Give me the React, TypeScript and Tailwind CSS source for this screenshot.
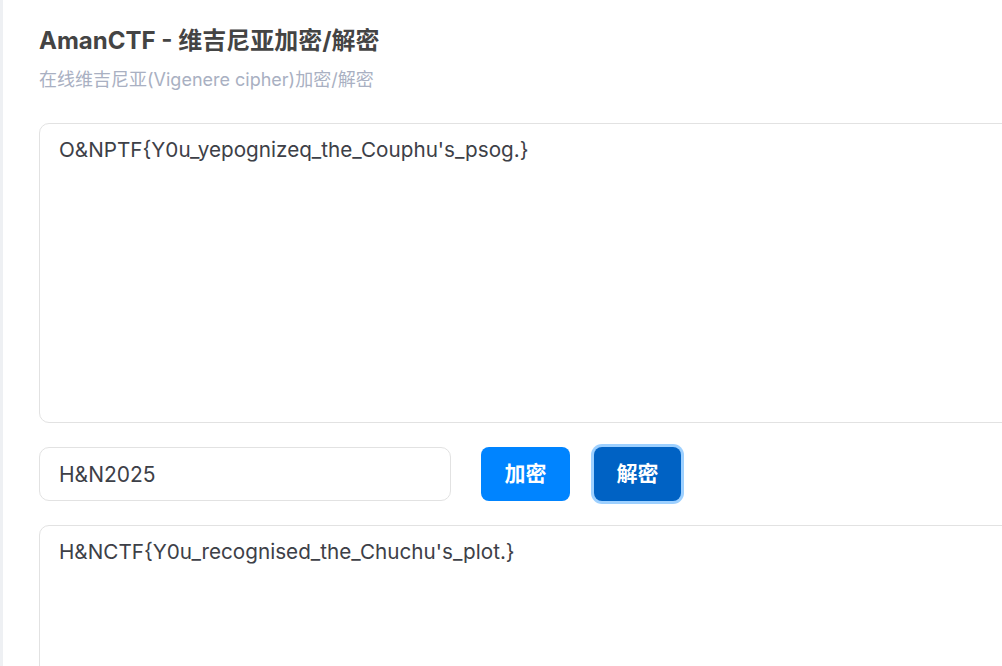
import React, { useState } from 'react';

export default function App() {
  const [input, setInput] = useState("O&NPTF{Y0u_yepognizeq_the_Couphu's_psog.}");
  const [key, setKey] = useState('H&N2025');
  const [output, setOutput] = useState("H&NCTF{Y0u_recognised_the_Chuchu's_plot.}");

  const font = { fontFamily: 'Inter, "Noto Sans CJK SC", sans-serif' };

  return (
    <div className="flex h-[666px] w-[1002px] overflow-hidden bg-white" style={font}>
      {/* left edge */}
      <div className="w-[3px] shrink-0 bg-[#eef0f3]" />

      <div className="flex shrink-0 flex-col pl-[36px] pt-[25px]">
        {/* Header */}
        <h1 className="text-[24px] font-bold leading-[32px] text-[#444444]">AmanCTF - 维吉尼亚加密/解密</h1>
        <p className="mt-[10px] text-[18px] leading-[26px] text-[#a9b0c2]">在线维吉尼亚(Vigenere cipher)加密/解密</p>

        {/* Source text */}
        <textarea
          value={input}
          onChange={(e) => setInput(e.target.value)}
          className="mt-[30px] h-[300px] w-[1000px] shrink-0 resize-none rounded-[10px] border border-[#e2e2e2] px-[19px] pt-[11px] text-[20.7px] leading-[30px] text-[#3d4047] outline-none"
        />

        {/* Key + actions */}
        <div className="mt-[24px] flex shrink-0 items-center">
          <input
            value={key}
            onChange={(e) => setKey(e.target.value)}
            className="h-[54px] w-[412px] rounded-[10px] border border-[#e2e2e2] px-[19px] text-[21px] text-[#3d4047] outline-none"
          />
          <button className="ml-[30px] h-[54px] w-[89px] rounded-[8px] bg-[#0084ff] text-[21px] font-bold text-white">
            加密
          </button>
          <button className="ml-[24px] h-[54px] w-[87px] rounded-[8px] bg-[#0062c4] text-[21px] font-bold text-white ring-[3px] ring-[#9dd0ff]">
            解密
          </button>
        </div>

        {/* Result */}
        <textarea
          value={output}
          onChange={(e) => setOutput(e.target.value)}
          className="mt-[24px] h-[300px] w-[1000px] shrink-0 resize-none rounded-[10px] border border-[#e2e2e2] px-[19px] pt-[11px] text-[20.7px] leading-[30px] text-[#3d4047] outline-none"
        />
      </div>
    </div>
  );
}
